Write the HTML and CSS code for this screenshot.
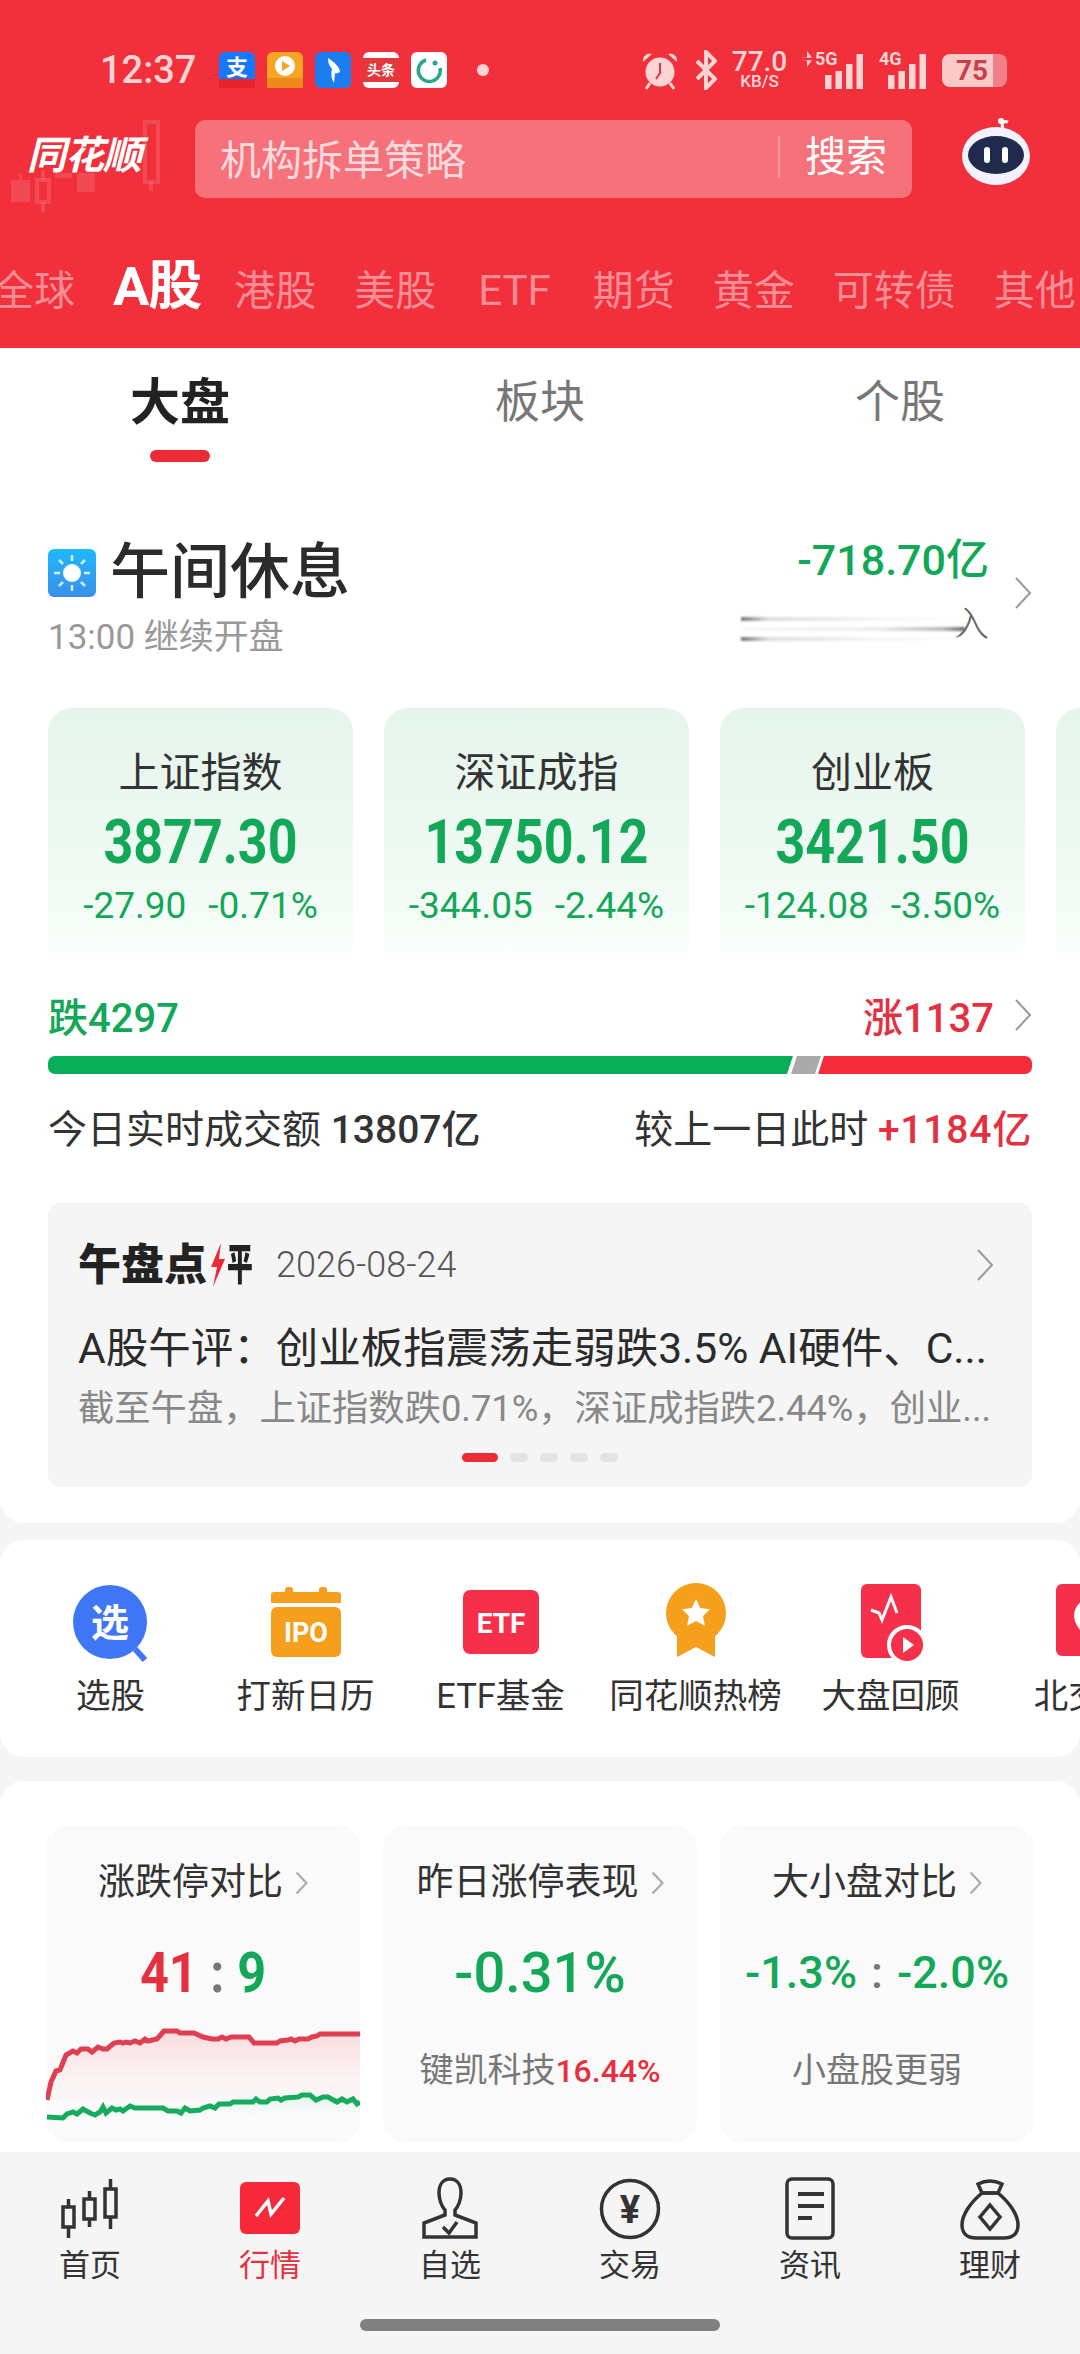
FILE: index.html
```html
<!DOCTYPE html>
<html lang="zh-CN">
<head>
  <meta charset="UTF-8" />
  <meta name="viewport" content="width=device-width, initial-scale=1.0" />
  <title>行情</title>
  <link rel="stylesheet" href="styles.css">
</head>
<body>

  <!-- Red header -->
  <header class="header">
    <div class="statusbar">
      <span class="clock">12:37</span>
      <div class="app-icons">
        <svg class="app-icon" viewBox="0 0 36 36"><rect width="36" height="36" rx="6" fill="#1677ff"/><rect y="27" width="36" height="9" fill="#e8232c"/><text x="18" y="23" text-anchor="middle" class="svg-label" font-size="22" fill="#fff">支</text></svg>
        <svg class="app-icon" viewBox="0 0 36 36"><rect width="36" height="36" rx="6" fill="#f5a623"/><rect y="26" width="36" height="10" fill="#ee8a1c"/><circle cx="18" cy="14" r="10" fill="#fff"/><path d="M15 9l8 5-8 5z" fill="#f5a623"/></svg>
        <svg class="app-icon" viewBox="0 0 36 36"><rect width="36" height="36" rx="6" fill="#1a7df0"/><path d="M13 6c6 4 12 9 12 14-2 1-4 2-5 1l-1 10c-3-5-3-10-2-14-3-3-4-7-4-11z" fill="#fff"/></svg>
        <svg class="app-icon" viewBox="0 0 36 36"><rect width="36" height="36" rx="6" fill="#fff"/><rect y="6" width="36" height="24" fill="#e4393c"/><text x="18" y="23" text-anchor="middle" class="svg-label" font-size="14" fill="#fff">头条</text></svg>
        <svg class="app-icon" viewBox="0 0 36 36"><rect width="36" height="36" rx="6" fill="#fff"/><path d="M15 8a11 11 0 1 0 14 8" fill="none" stroke="#27a88c" stroke-width="3.5"/><circle cx="24" cy="11" r="2.5" fill="#27a88c"/></svg>
        <span class="status-dot"></span>
      </div>
      <div class="status-right">
        <svg class="alarm" viewBox="0 0 38 40"><circle cx="19" cy="22" r="14.500" fill="#fcd4d4"/><path d="M19 13v10l-4 6" fill="none" stroke="#f1303b" stroke-width="2"/><path d="M2 12a7 7 0 0 1 9-8zM36 12a7 7 0 0 0-9-8z" fill="#fcd4d4"/><path d="M9 33l-4 6M29 33l4 6" stroke="#fcd4d4" stroke-width="3"/></svg>
        <svg class="bluetooth" viewBox="0 0 22 40"><path d="M2 11l18 18-9 9V2l9 9L2 29" fill="none" stroke="#fcd4d4" stroke-width="4"/></svg>
        <div class="netspeed"><span>77.0</span><span class="netspeed-unit">KB/S</span></div>
        <div class="signal signal-5g">
          <span class="signal-tag"><i class="updown"></i>5G</span>
          <svg class="bars" viewBox="0 0 38 35"><path d="M0 35V21h6.500v14zM10.500 35V17H17v18zM21 35V10h6.500v25zM31.500 35V0H38v35z" fill="#fcd4d4"/></svg>
        </div>
        <div class="signal signal-4g">
          <span class="signal-tag">4G</span>
          <svg class="bars" viewBox="0 0 38 35"><path d="M0 35V21h6.500v14zM10.500 35V17H17v18zM21 35V10h6.500v25zM31.500 35V0H38v35z" fill="#fcd4d4"/></svg>
        </div>
        <div class="battery"><span>75</span></div>
      </div>
    </div>

    <div class="searchrow">
      <div class="logo">
        <svg class="logo-candles" viewBox="0 0 170 90"><g fill="rgba(255,255,255,.13)"><path d="M11 60h19v22H11zM19 54h3v6h-3zM77 53h18v19H77zM55 53h17v5H55z"/></g><g fill="none" stroke="rgba(255,255,255,.13)" stroke-width="4"><rect x="37" y="60" width="12" height="22"/><path d="M43 50v10M43 82v10"/><rect x="145" y="2" width="13" height="60"/><path d="M151 62v9"/></g></svg>
        <span class="logo-text">同花顺</span>
      </div>
      <div class="search">
        <span class="search-hint">机构拆单策略</span>
        <span class="search-btn">搜索</span>
      </div>
      <svg class="robot" viewBox="0 0 72 70"><path d="M43 11c-2-4 0-8 5-6" fill="none" stroke="#fff" stroke-width="3"/><circle cx="41" cy="4" r="3" fill="#fff"/><ellipse cx="36" cy="39" rx="34" ry="29" fill="#f5f2ff"/><ellipse cx="36" cy="38" rx="28" ry="19" fill="#1f2a4d"/><rect x="24" y="30" width="6" height="16" rx="3" fill="#fff"/><rect x="42" y="30" width="6" height="16" rx="3" fill="#fff"/></svg>
    </div>

    <nav class="market-tabs">
      <span class="market-tab">全球</span>
      <span class="market-tab active">A股</span>
      <span class="market-tab">港股</span>
      <span class="market-tab">美股</span>
      <span class="market-tab latin">ETF</span>
      <span class="market-tab">期货</span>
      <span class="market-tab">黄金</span>
      <span class="market-tab">可转债</span>
      <span class="market-tab">其他</span>
    </nav>
  </header>

  <main class="content">
    <section class="panel-top">
      <div class="subtabs">
        <div class="subtab active"><span>大盘</span><i></i></div>
        <div class="subtab"><span>板块</span></div>
        <div class="subtab"><span>个股</span></div>
      </div>

      <div class="session">
        <div>
          <div class="session-title">
            <svg class="sun" viewBox="0 0 48 48"><defs><linearGradient id="sunBg" x1="0" y1="0" x2="0" y2="1"><stop offset="0" stop-color="#1fb8fb"/><stop offset="1" stop-color="#3a8fe8"/></linearGradient></defs><rect width="48" height="48" rx="6" fill="url(#sunBg)"/><circle cx="24" cy="24" r="9" fill="#fff"/><path d="M24 6v6M24 36v6M6 24h6M36 24h6M11 11l4 4M33 33l4 4M37 11l-4 4M15 33l-4 4" stroke="#cfeeff" stroke-width="2.500"/></svg>
            <span>午间休息</span>
          </div>
          <div class="session-sub">13:00 继续开盘</div>
        </div>
        <div class="flow">
          <div class="flow-nums">
            <div class="flow-value">-718.70亿</div>
            <div class="flow-label"><div class="flow-blur"><i></i><i></i><i></i></div><span>入</span></div>
          </div>
          <svg class="chevron" viewBox="0 0 18 34"><path d="M2 2l14 15L2 32" /></svg>
        </div>
      </div>

      <div class="index-cards">
        <div class="index-card">
          <div class="index-name">上证指数</div>
          <div class="index-value"><span>3877.30</span></div>
          <div class="index-change"><span>-27.90</span><span>-0.71%</span></div>
        </div>
        <div class="index-card">
          <div class="index-name">深证成指</div>
          <div class="index-value"><span>13750.12</span></div>
          <div class="index-change"><span>-344.05</span><span>-2.44%</span></div>
        </div>
        <div class="index-card">
          <div class="index-name">创业板</div>
          <div class="index-value"><span>3421.50</span></div>
          <div class="index-change"><span>-124.08</span><span>-3.50%</span></div>
        </div>
        <div class="index-card"></div>
      </div>

      <div class="breadth">
        <span class="green">跌4297</span>
        <div class="breadth-right">
          <span class="red">涨1137</span>
          <svg class="chevron" viewBox="0 0 18 34"><path d="M2 2l14 15L2 32" /></svg>
        </div>
      </div>
      <div class="breadth-bar">
        <div class="bar-down"></div>
        <div class="bar-flat"></div>
        <div class="bar-up"></div>
      </div>

      <div class="turnover">
        <div>今日实时成交额 <b>13807亿</b></div>
        <div>较上一日此时 <b class="red">+1184亿</b></div>
      </div>

      <div class="news">
        <div class="news-head">
          <span class="news-brand">午盘点</span>
          <svg class="news-bolt" viewBox="0 0 16 44"><path d="M11 0L1 24h6L3 44l12-28H9z" fill="#ed2b37"/></svg>
          <span class="news-brand news-brand-end">平</span>
          <span class="news-date">2026-08-24</span>
          <svg class="chevron" viewBox="0 0 18 34"><path d="M2 2l14 15L2 32" /></svg>
        </div>
        <div class="news-title">A股午评：创业板指震荡走弱跌3.5% AI硬件、C...</div>
        <div class="news-sub">截至午盘，上证指数跌0.71%，深证成指跌2.44%，创业...</div>
        <div class="dots"><i class="on"></i><i></i><i></i><i></i><i></i></div>
      </div>
    </section>

    <section class="panel shortcuts">
      <div class="shortcut">
        <svg viewBox="0 0 84 84"><circle cx="41" cy="41" r="37" fill="#3f76f5"/><path d="M66 68l10 11" stroke="#3f76f5" stroke-width="6"/><text x="41" y="55" text-anchor="middle" class="svg-label" font-size="38" fill="#fff">选</text></svg>
        <span>选股</span>
      </div>
      <div class="shortcut">
        <svg viewBox="0 0 84 84"><path d="M10 11h64a3 3 0 0 1 3 3v8H7v-8a3 3 0 0 1 3-3z" fill="#f59f1c"/><rect x="21" y="6" width="8" height="10" rx="3" fill="#f59f1c"/><rect x="55" y="6" width="8" height="10" rx="3" fill="#f59f1c"/><rect x="7" y="26" width="70" height="50" rx="6" fill="#f59f1c"/><text x="42" y="61" text-anchor="middle" class="svg-label" font-size="27" fill="#fff">IPO</text></svg>
        <span>打新日历</span>
      </div>
      <div class="shortcut">
        <svg viewBox="0 0 84 84"><rect x="4" y="9" width="76" height="64" rx="7" fill="#f6304a"/><text x="42" y="52" text-anchor="middle" class="svg-label" font-size="28" fill="#fff">ETF</text></svg>
        <span>ETF基金</span>
      </div>
      <div class="shortcut">
        <svg viewBox="0 0 84 84"><path d="M23 50v26l19-10 19 10V50z" fill="#f59f1c"/><circle cx="42" cy="32" r="30" fill="#f59f1c"/><path d="M42 18l4.300 9 9.700 1.200-7 6.800 1.900 9.800-8.900-4.800-8.900 4.800 1.900-9.800-7-6.800 9.700-1.200z" fill="#fff"/></svg>
        <span>同花顺热榜</span>
      </div>
      <div class="shortcut">
        <svg viewBox="0 0 84 84"><rect x="12" y="3" width="60" height="74" rx="6" fill="#f6304a"/><path d="M22 29l8 3 3 7 9-23 6 16" fill="none" stroke="#fff" stroke-width="3"/><circle cx="58" cy="64" r="18" fill="#f6304a" stroke="#fff" stroke-width="4"/><path d="M54 56l11 8-11 8z" fill="#fff"/></svg>
        <span>大盘回顾</span>
      </div>
      <div class="shortcut">
        <svg viewBox="0 0 84 84"><rect x="12" y="3" width="72" height="72" rx="6" fill="#f6304a"/><path d="M30 35a18 18 0 0 1 36 0c0 12-18 26-18 26S30 47 30 35z" fill="#fff"/></svg>
        <span>北交所</span>
      </div>
    </section>

    <section class="panel compare">
      <div class="compare-card">
        <div class="compare-title">涨跌停对比<svg class="chevron" viewBox="0 0 18 34"><path d="M2 2l14 15L2 32" /></svg></div>
        <div class="compare-value limit"><span class="red">41</span><span class="colon">:</span><span class="green">9</span></div>
        <svg class="limit-chart" viewBox="0 0 314 121">
          <defs>
            <linearGradient id="redFill" x1="0" y1="0" x2="0" y2="1"><stop offset="0" stop-color="#f9d3d6" stop-opacity=".8"/><stop offset="1" stop-color="#fdf0f1" stop-opacity=".3"/></linearGradient>
            <linearGradient id="greenFill" x1="0" y1="0" x2="0" y2="1"><stop offset="0" stop-color="#d7f2e3" stop-opacity=".7"/><stop offset=".6" stop-color="#fafafa" stop-opacity="0"/></linearGradient>
          </defs>
          <path d="M1 78L5 60 10 49 14 48 20 33 27 29 31 31 35 27 42 27 46 30 52 25 57 27 61 27 68 21 74 20 77 21 80 20 84 21 89 19 94 21 99 17 102 19 111 17 118 9 131 9 134 11 144 11 148 11 157 15 166 17 172 17 176 15 180 17 185 15 203 15 208 21 231 21 234 19 242 18 245 17 249 19 253 17 262 17 266 15 271 14 274 12 314 12V78H1z" fill="url(#redFill)"/>
          <path d="M1 95L17 96 21 92 27 90 31 92 37 87 44 91 49 93 54 90 57 85 60 91 66 86 70 88 74 87 77 89 84 84 89 86 117 86 122 89 131 89 135 91 139 86 144 89 154 88 157 86 164 84 169 86 173 82 184 82 187 80 207 80 210 77 214 80 221 80 224 77 232 76 235 78 239 76 252 75 256 73 264 73 270 78 277 75 282 75 291 80 296 77 301 80 307 77 311 82 314 80V121H1z" fill="url(#greenFill)"/>
          <polyline class="line-red" points="1,78 5,60 10,49 14,48 20,33 27,29 31,31 35,27 42,27 46,30 52,25 57,27 61,27 68,21 74,20 77,21 80,20 84,21 89,19 94,21 99,17 102,19 111,17 118,9 131,9 134,11 144,11 148,11 157,15 166,17 172,17 176,15 180,17 185,15 203,15 208,21 231,21 234,19 242,18 245,17 249,19 253,17 262,17 266,15 271,14 274,12 314,12"/>
          <polyline class="line-green" points="1,95 17,96 21,92 27,90 31,92 37,87 44,91 49,93 54,90 57,85 60,91 66,86 70,88 74,87 77,89 84,84 89,86 117,86 122,89 131,89 135,91 139,86 144,89 154,88 157,86 164,84 169,86 173,82 184,82 187,80 207,80 210,77 214,80 221,80 224,77 232,76 235,78 239,76 252,75 256,73 264,73 270,78 277,75 282,75 291,80 296,77 301,80 307,77 311,82 314,80"/>
        </svg>
      </div>
      <div class="compare-card">
        <div class="compare-title">昨日涨停表现<svg class="chevron" viewBox="0 0 18 34"><path d="M2 2l14 15L2 32" /></svg></div>
        <div class="compare-value green">-0.31%</div>
        <div class="compare-sub">键凯科技<b class="red">16.44%</b></div>
      </div>
      <div class="compare-card">
        <div class="compare-title">大小盘对比<svg class="chevron" viewBox="0 0 18 34"><path d="M2 2l14 15L2 32" /></svg></div>
        <div class="compare-value small green">-1.3%<span class="colon">:</span>-2.0%</div>
        <div class="compare-sub">小盘股更弱</div>
      </div>
    </section>
  </main>

  <!-- Bottom navigation -->
  <footer class="bottom">
    <nav class="bottom-nav">
      <div class="nav-item">
        <svg viewBox="0 0 64 64"><g fill="none" stroke="#333" stroke-width="3.500"><rect x="5" y="30" width="11" height="20"/><path d="M10.500 22v8M10.500 50v11"/><rect x="26" y="22" width="11" height="20"/><path d="M31.500 14v8M31.500 42v8"/><rect x="47" y="12" width="11" height="28"/><path d="M52.500 2v10M52.500 40v12"/></g></svg>
        <span>首页</span>
      </div>
      <div class="nav-item active">
        <svg viewBox="0 0 64 64"><rect x="2" y="5" width="60" height="52" rx="6" fill="#f6293a"/><path d="M18 39l12-15 3 13 13-16" fill="none" stroke="#fff" stroke-width="3.500"/></svg>
        <span>行情</span>
      </div>
      <div class="nav-item">
        <svg viewBox="0 0 64 64"><g fill="none" stroke="#333" stroke-width="3.500"><path d="M32 2c8 0 11 7 11 14s-3 14-6 17v5l21 8v14H6V46l21-8v-5c-3-3-6-10-6-17S24 2 32 2z"/><path d="M25 50l6 6 8-11"/></g></svg>
        <span>自选</span>
      </div>
      <div class="nav-item">
        <svg viewBox="0 0 64 64"><circle cx="32" cy="32" r="28.500" fill="none" stroke="#333" stroke-width="3.500"/><text x="32" y="46" text-anchor="middle" class="svg-label" font-size="38" fill="#333">¥</text></svg>
        <span>交易</span>
      </div>
      <div class="nav-item">
        <svg viewBox="0 0 64 64"><rect x="9" y="2" width="46" height="59" rx="5" fill="none" stroke="#333" stroke-width="3.500"/><path d="M20 17h26M20 29h26M20 41h14" stroke="#333" stroke-width="4"/></svg>
        <span>资讯</span>
      </div>
      <div class="nav-item">
        <svg viewBox="0 0 64 64"><g fill="none" stroke="#333" stroke-width="3.500"><path d="M24 16c-12 10-20 22-20 32 0 9 6 13 14 13h28c8 0 14-4 14-13 0-10-8-22-20-32z"/><path d="M24 16l-4-9c8-4 16-4 24 0l-4 9z"/><path d="M32 28l10 12-10 12-10-12z"/></g></svg>
        <span>理财</span>
      </div>
    </nav>
    <div class="home-bar"></div>
  </footer>

</body>
</html>
```

FILE: styles.css
```css
* {
  box-sizing: border-box;
  margin: 0;
  padding: 0;
}

body {
  width: 1080px;
  height: 2354px;
  display: flex;
  flex-direction: column;
  overflow: hidden;
  background-color: #f5f5f5;
  color: #333;
  font-family: Roboto, "Noto Sans CJK SC", sans-serif;
}

.red { color: #e5303f; }
.green { color: #12a858; }

.svg-label {
  font-family: Roboto, "Noto Sans CJK SC", sans-serif;
  font-weight: 700;
}

.chevron {
  width: 18px;
  height: 34px;
  flex: none;
  fill: none;
  stroke: #999;
  stroke-width: 2;
}

/* header */
.header {
  flex: none;
  height: 348px;
  background-color: #f1303b;
  color: #fff;
  overflow: hidden;
}

.statusbar {
  display: flex;
  align-items: center;
  justify-content: space-between;
  height: 40px;
  margin-top: 50px;
  padding: 0 73px 0 100px;
  color: #fcd4d4;
}

.clock {
  font-size: 38px;
  font-weight: 500;
  width: 119px;
}

.app-icons {
  display: flex;
  align-items: center;
  gap: 12px;
  flex: 1;
}

.app-icon {
  width: 36px;
  height: 36px;
}

.status-dot {
  width: 12px;
  height: 12px;
  margin-left: 18px;
  border-radius: 50%;
  background-color: #fcd4d4;
}

.status-right {
  display: flex;
  align-items: center;
  gap: 16px;
}

.alarm {
  width: 38px;
  height: 40px;
}

.bluetooth {
  width: 22px;
  height: 40px;
}

.netspeed {
  display: flex;
  flex-direction: column;
  align-items: center;
  width: 53px;
  font-size: 28px;
  font-weight: 500;
  line-height: 23px;
}

.netspeed-unit {
  font-size: 17px;
  line-height: 17px;
}

.signal {
  position: relative;
  height: 38px;
}

.signal-5g { width: 61px; }
.signal-4g { width: 47px; }

.signal-tag {
  position: absolute;
  top: -1px;
  left: 0;
  display: flex;
  align-items: center;
  gap: 3px;
  font-size: 18px;
  font-weight: 700;
  line-height: 18px;
  white-space: nowrap;
}

.updown {
  width: 10px;
  height: 16px;
  background: linear-gradient(180deg, #fcd4d4 0 42%, transparent 42% 58%, #fcd4d4 58%);
  clip-path: polygon(50% 0, 100% 42%, 0 42%, 0 58%, 100% 58%, 50% 100%);
}

.bars {
  position: absolute;
  right: 0;
  bottom: 0;
  width: 38px;
  height: 35px;
}

.battery {
  width: 65px;
  height: 33px;
  border-radius: 8px;
  background: linear-gradient(90deg, #fcc9c9 78%, #f2808a 78%);
  color: #c9404a;
  font-size: 28px;
  font-weight: 700;
  line-height: 33px;
  padding-left: 14px;
}

.searchrow {
  display: flex;
  align-items: center;
  height: 78px;
  margin-top: 30px;
  padding: 0 48px 0 0;
}

.logo {
  position: relative;
  width: 195px;
  height: 78px;
  padding: 4px 0 0 27px;
}

.logo-candles {
  position: absolute;
  top: 0;
  left: 0;
  width: 170px;
  height: 90px;
  overflow: visible;
}

.logo-text {
  position: relative;
  font-family: "Noto Sans CJK SC", sans-serif;
  font-size: 39px;
  font-style: italic;
  font-weight: 700;
  letter-spacing: -1px;
}

.search {
  display: flex;
  align-items: center;
  justify-content: space-between;
  width: 717px;
  height: 78px;
  padding: 0 25px 5px;
  border-radius: 10px;
  background-color: #f7717a;
}

.search-hint {
  color: #fcd9dc;
  font-size: 41px;
}

.search-btn {
  padding-left: 25px;
  border-left: 2px solid #fb9aa0;
  font-size: 41px;
  line-height: 42px;
}

.robot {
  width: 72px;
  height: 70px;
  margin: -14px 0 0 48px;
}

.market-tabs {
  display: flex;
  align-items: baseline;
  gap: 38px;
  height: 76px;
  margin: 44px 0 0 -7px;
  white-space: nowrap;
  font-size: 41px;
  color: #f98d96;
}

.market-tab.latin {
  margin: 0 4px;
  font-size: 42px;
}

.market-tab.active {
  margin-right: -5px;
  color: #fff;
  font-size: 54px;
  font-weight: 700;
  letter-spacing: -1px;
}

/* main content */
.content {
  flex: 1;
  min-height: 0;
  overflow: hidden;
}

.panel-top {
  height: 1175px;
  padding-top: 23px;
  background-color: #fff;
  border-radius: 0 0 24px 24px;
}

.subtabs {
  display: grid;
  grid-template-columns: repeat(3, 1fr);
  height: 91px;
}

.subtab {
  display: flex;
  flex-direction: column;
  align-items: center;
  font-size: 45px;
  line-height: 64px;
  color: #777;
}

.subtab.active {
  color: #222;
  font-size: 50px;
  font-weight: 700;
}

.subtab i {
  display: block;
  width: 60px;
  height: 12px;
  margin-top: 15px;
  border-radius: 6px;
  background-color: #ed2b37;
}

.session {
  display: flex;
  justify-content: space-between;
  margin: 73px 48px 0;
}

.session-title {
  display: flex;
  align-items: center;
  gap: 14px;
  padding-top: 3px;
  font-size: 60px;
  font-weight: 500;
  line-height: 70px;
  color: #2b2b2b;
}

.sun {
  width: 48px;
  height: 48px;
}

.session-sub {
  margin-top: 5px;
  font-size: 35px;
  line-height: 50px;
  color: #999;
}

.flow {
  display: flex;
  align-items: center;
  gap: 25px;
  height: 115px;
}

.flow-nums {
  display: flex;
  flex-direction: column;
  align-items: flex-end;
}

.flow-value {
  color: #12a858;
  font-size: 43px;
  font-weight: 500;
  line-height: 50px;
}

.flow-label {
  display: flex;
  align-items: center;
  height: 50px;
  margin-top: 16px;
  font-size: 36px;
  font-weight: 300;
  color: #666;
}

.flow-label span {
  margin-top: -10px;
}

.flow-blur {
  display: flex;
  flex-direction: column;
  gap: 6px;
  width: 224px;
  margin: 6px -12px 0 0;
}

.flow-blur i {
  display: block;
  height: 4px;
  background: linear-gradient(90deg, #777 0, #ddd 12%, #f6f6f6 60%, #fff 100%);
  filter: blur(1px);
}

.flow-blur i:nth-child(2) {
  background: linear-gradient(90deg, #f8f8f8 0, #eee 60%, #bbb 90%, #666 100%);
}

.index-cards {
  display: flex;
  gap: 31px;
  margin: 45px 0 0 48px;
  overflow: hidden;
}

.index-card {
  flex: none;
  width: 305px;
  height: 257px;
  padding-top: 40px;
  border-radius: 24px 24px 0 0;
  background: linear-gradient(180deg, #e5f5ec 0, #eff9f3 55%, #f6fcf8 85%, #fff 100%);
  text-align: center;
}

.index-name {
  font-size: 41px;
  line-height: 50px;
  color: #333;
}

.index-value {
  margin-top: 10px;
  color: #12a858;
  font-size: 52px;
  font-weight: 700;
  line-height: 70px;
}

.index-value span {
  display: inline-block;
  transform: scaleY(1.16);
}

.index-change {
  display: flex;
  justify-content: center;
  gap: 22px;
  margin-top: 3px;
  color: #12a858;
  font-size: 37px;
  line-height: 50px;
}

.breadth {
  display: flex;
  justify-content: space-between;
  align-items: center;
  height: 50px;
  margin: 25px 48px 0;
  font-size: 40px;
  font-weight: 500;
}

.breadth-right {
  display: flex;
  align-items: center;
  gap: 20px;
}

.breadth-bar {
  display: flex;
  height: 18px;
  margin: 16px 48px 0;
  border-radius: 7px;
  overflow: hidden;
}

.bar-down {
  flex: none;
  width: 752px;
  margin: 0 4px 0 -10px;
  background-color: #08ae58;
  transform: skewX(-18deg);
}

.bar-flat {
  flex: none;
  width: 24px;
  margin-right: 3px;
  background-color: #aaa;
  transform: skewX(-18deg);
}

.bar-up {
  flex: 1;
  margin-right: -10px;
  background-color: #f52c3a;
  transform: skewX(-18deg);
}

.turnover {
  display: flex;
  justify-content: space-between;
  margin: 31px 48px 0;
  font-size: 39px;
  line-height: 50px;
  color: #333;
}

.turnover b {
  font-weight: 500;
}

.turnover .red {
  letter-spacing: .8px;
}

.news {
  height: 284px;
  margin: 48px 48px 0;
  padding: 38px 38px 0 30px;
  border-radius: 12px;
  background-color: #f5f5f5;
}

.news-head {
  display: flex;
  align-items: center;
  height: 48px;
}

.news-brand {
  font-size: 43px;
  font-weight: 900;
  line-height: 48px;
  color: #222;
}

.news-brand-end {
  width: 26px;
  transform: scaleX(.6);
  transform-origin: left;
}

.news-bolt {
  width: 16px;
  height: 44px;
  margin: 0 1px 0 3px;
}

.news-date {
  flex: 1;
  margin-left: 23px;
  font-size: 36px;
  font-weight: 300;
  color: #555;
}

.news-title,
.news-sub {
  white-space: nowrap;
}

.news-title {
  margin-top: 30px;
  font-size: 42.5px;
  line-height: 60px;
  color: #2b2b2b;
}

.news-sub {
  font-size: 36.3px;
  line-height: 60px;
  color: #888;
}

.dots {
  display: flex;
  justify-content: center;
  gap: 12px;
  margin-top: 14px;
  padding-left: 8px;
}

.dots i {
  width: 18px;
  height: 9px;
  border-radius: 5px;
  background-color: #e3e3e3;
}

.dots i.on {
  width: 36px;
  background-color: #ed2b37;
}

.panel {
  background-color: #fff;
  border-radius: 24px;
}

.shortcuts {
  display: flex;
  height: 217px;
  margin-top: 17px;
  padding: 41px 0 0 13px;
  overflow: hidden;
}

.shortcut {
  flex: none;
  display: flex;
  flex-direction: column;
  align-items: center;
  gap: 8px;
  width: 195px;
  font-size: 34.5px;
  line-height: 46px;
  color: #333;
  white-space: nowrap;
}

.shortcut svg {
  width: 84px;
  height: 84px;
}

.compare {
  display: grid;
  grid-template-columns: repeat(3, 314px);
  gap: 23px;
  margin-top: 24px;
  padding: 44px 47px 0 46px;
  height: 400px;
}

.compare-card {
  height: 318px;
  padding-top: 34px;
  border-radius: 24px;
  background-color: #fafafa;
  text-align: center;
  overflow: hidden;
}

.compare-title {
  display: flex;
  justify-content: center;
  align-items: center;
  gap: 12px;
  font-size: 37px;
  line-height: 48px;
  color: #333;
}

.compare-title .chevron {
  width: 13px;
  height: 24px;
  stroke: #aaa;
  stroke-width: 3;
}

.compare-value {
  margin-top: 28px;
  font-size: 56px;
  font-weight: 500;
  line-height: 76px;
}

.compare-value.small {
  font-size: 45px;
}

.colon {
  margin: 0 14px;
  color: #777;
}

.limit {
  font-weight: 700;
  transform: scaleX(.9);
}

.limit-chart {
  display: block;
  width: 314px;
  height: 121px;
  margin-top: 11px;
}

.line-red,
.line-green {
  fill: none;
  stroke-width: 5;
}

.line-red { stroke: #df3f50; }
.line-green { stroke: #16ab5e; }

.compare-sub {
  margin-top: 34px;
  font-size: 34px;
  line-height: 50px;
  color: #777;
}

.compare-sub b {
  font-size: 32px;
  font-weight: 500;
}

/* bottom nav */
.bottom {
  flex: none;
  height: 202px;
  background-color: #f5f5f5;
}

.bottom-nav {
  display: grid;
  grid-template-columns: repeat(6, 180px);
  padding-top: 25px;
}

.nav-item {
  display: flex;
  flex-direction: column;
  align-items: center;
  gap: 2px;
  font-size: 31px;
  line-height: 46px;
  color: #333;
}

.nav-item svg {
  width: 64px;
  height: 64px;
}

.nav-item.active {
  color: #e5303f;
}

.home-bar {
  width: 360px;
  height: 12px;
  margin: 30px auto 0;
  border-radius: 6px;
  background-color: #808080;
}
```
